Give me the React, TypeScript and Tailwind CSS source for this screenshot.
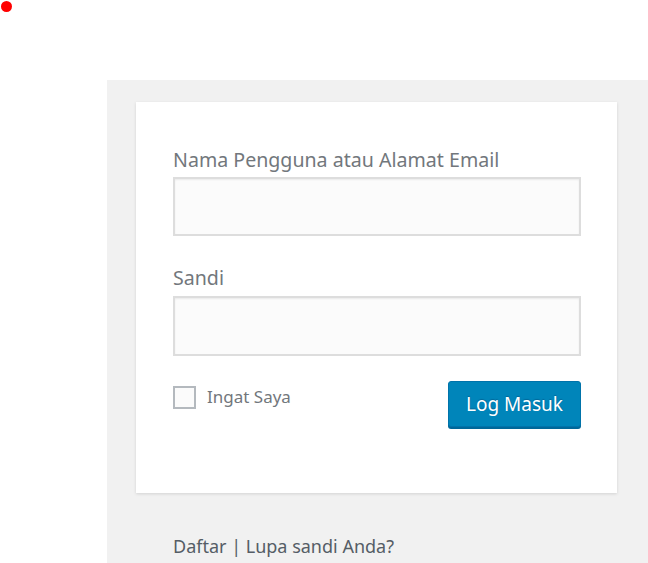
export default function App() {
    return (
        <div className="relative w-[648px] h-[563px] overflow-hidden bg-white font-['Noto_Sans',sans-serif]">
            <div className="absolute left-[1px] top-[1px] w-[11px] h-[11px] rounded-full bg-[#ff0000]" />
            <div className="ml-[107px] mt-[80px] h-[483px] bg-[#f1f1f1] pl-[29px] pt-[22px]">
                <div className="w-[481px] h-[391px] bg-white shadow-[0_1px_3px_rgba(0,0,0,0.13)] pl-[37px] pr-[36px] pt-[44px]">
                    <label className="block h-[28px] text-[19.6px] leading-[28px] text-[#72777c]">
                        Nama Pengguna atau Alamat Email
                    </label>
                    <div className="mt-[3px] h-[59px] border-2 border-[#dddddd] bg-[#fbfbfb] shadow-[inset_0_1px_2px_rgba(0,0,0,0.07)]" />
                    <label className="mt-[28px] block h-[28px] text-[19.6px] leading-[28px] text-[#72777c]">
                        Sandi
                    </label>
                    <div className="mt-[4px] h-[60px] border-2 border-[#dddddd] bg-[#fbfbfb] shadow-[inset_0_1px_2px_rgba(0,0,0,0.07)]" />
                    <div className="mt-[25px] flex items-start justify-between">
                        <div className="mt-[4px] flex items-center gap-[11px]">
                            <div className="w-[23px] h-[23px] border-2 border-[#b4b9be] bg-[#fbfbfb]" />
                            <span className="text-[17px] leading-[24px] text-[#72777c]">Ingat Saya</span>
                        </div>
                        <button className="w-[133px] h-[46px] rounded-[3px] border border-[#0073aa] bg-[#0085ba] text-[19px] text-white shadow-[0_2px_0_#006799] [text-shadow:0_-1px_1px_#006799]">
                            Log Masuk
                        </button>
                    </div>
                </div>
                <div className="mt-[40px] pl-[37px] text-[18px] leading-[26px] text-[#555d66]">
                    Daftar | Lupa sandi Anda?
                </div>
            </div>
        </div>
    );
}
